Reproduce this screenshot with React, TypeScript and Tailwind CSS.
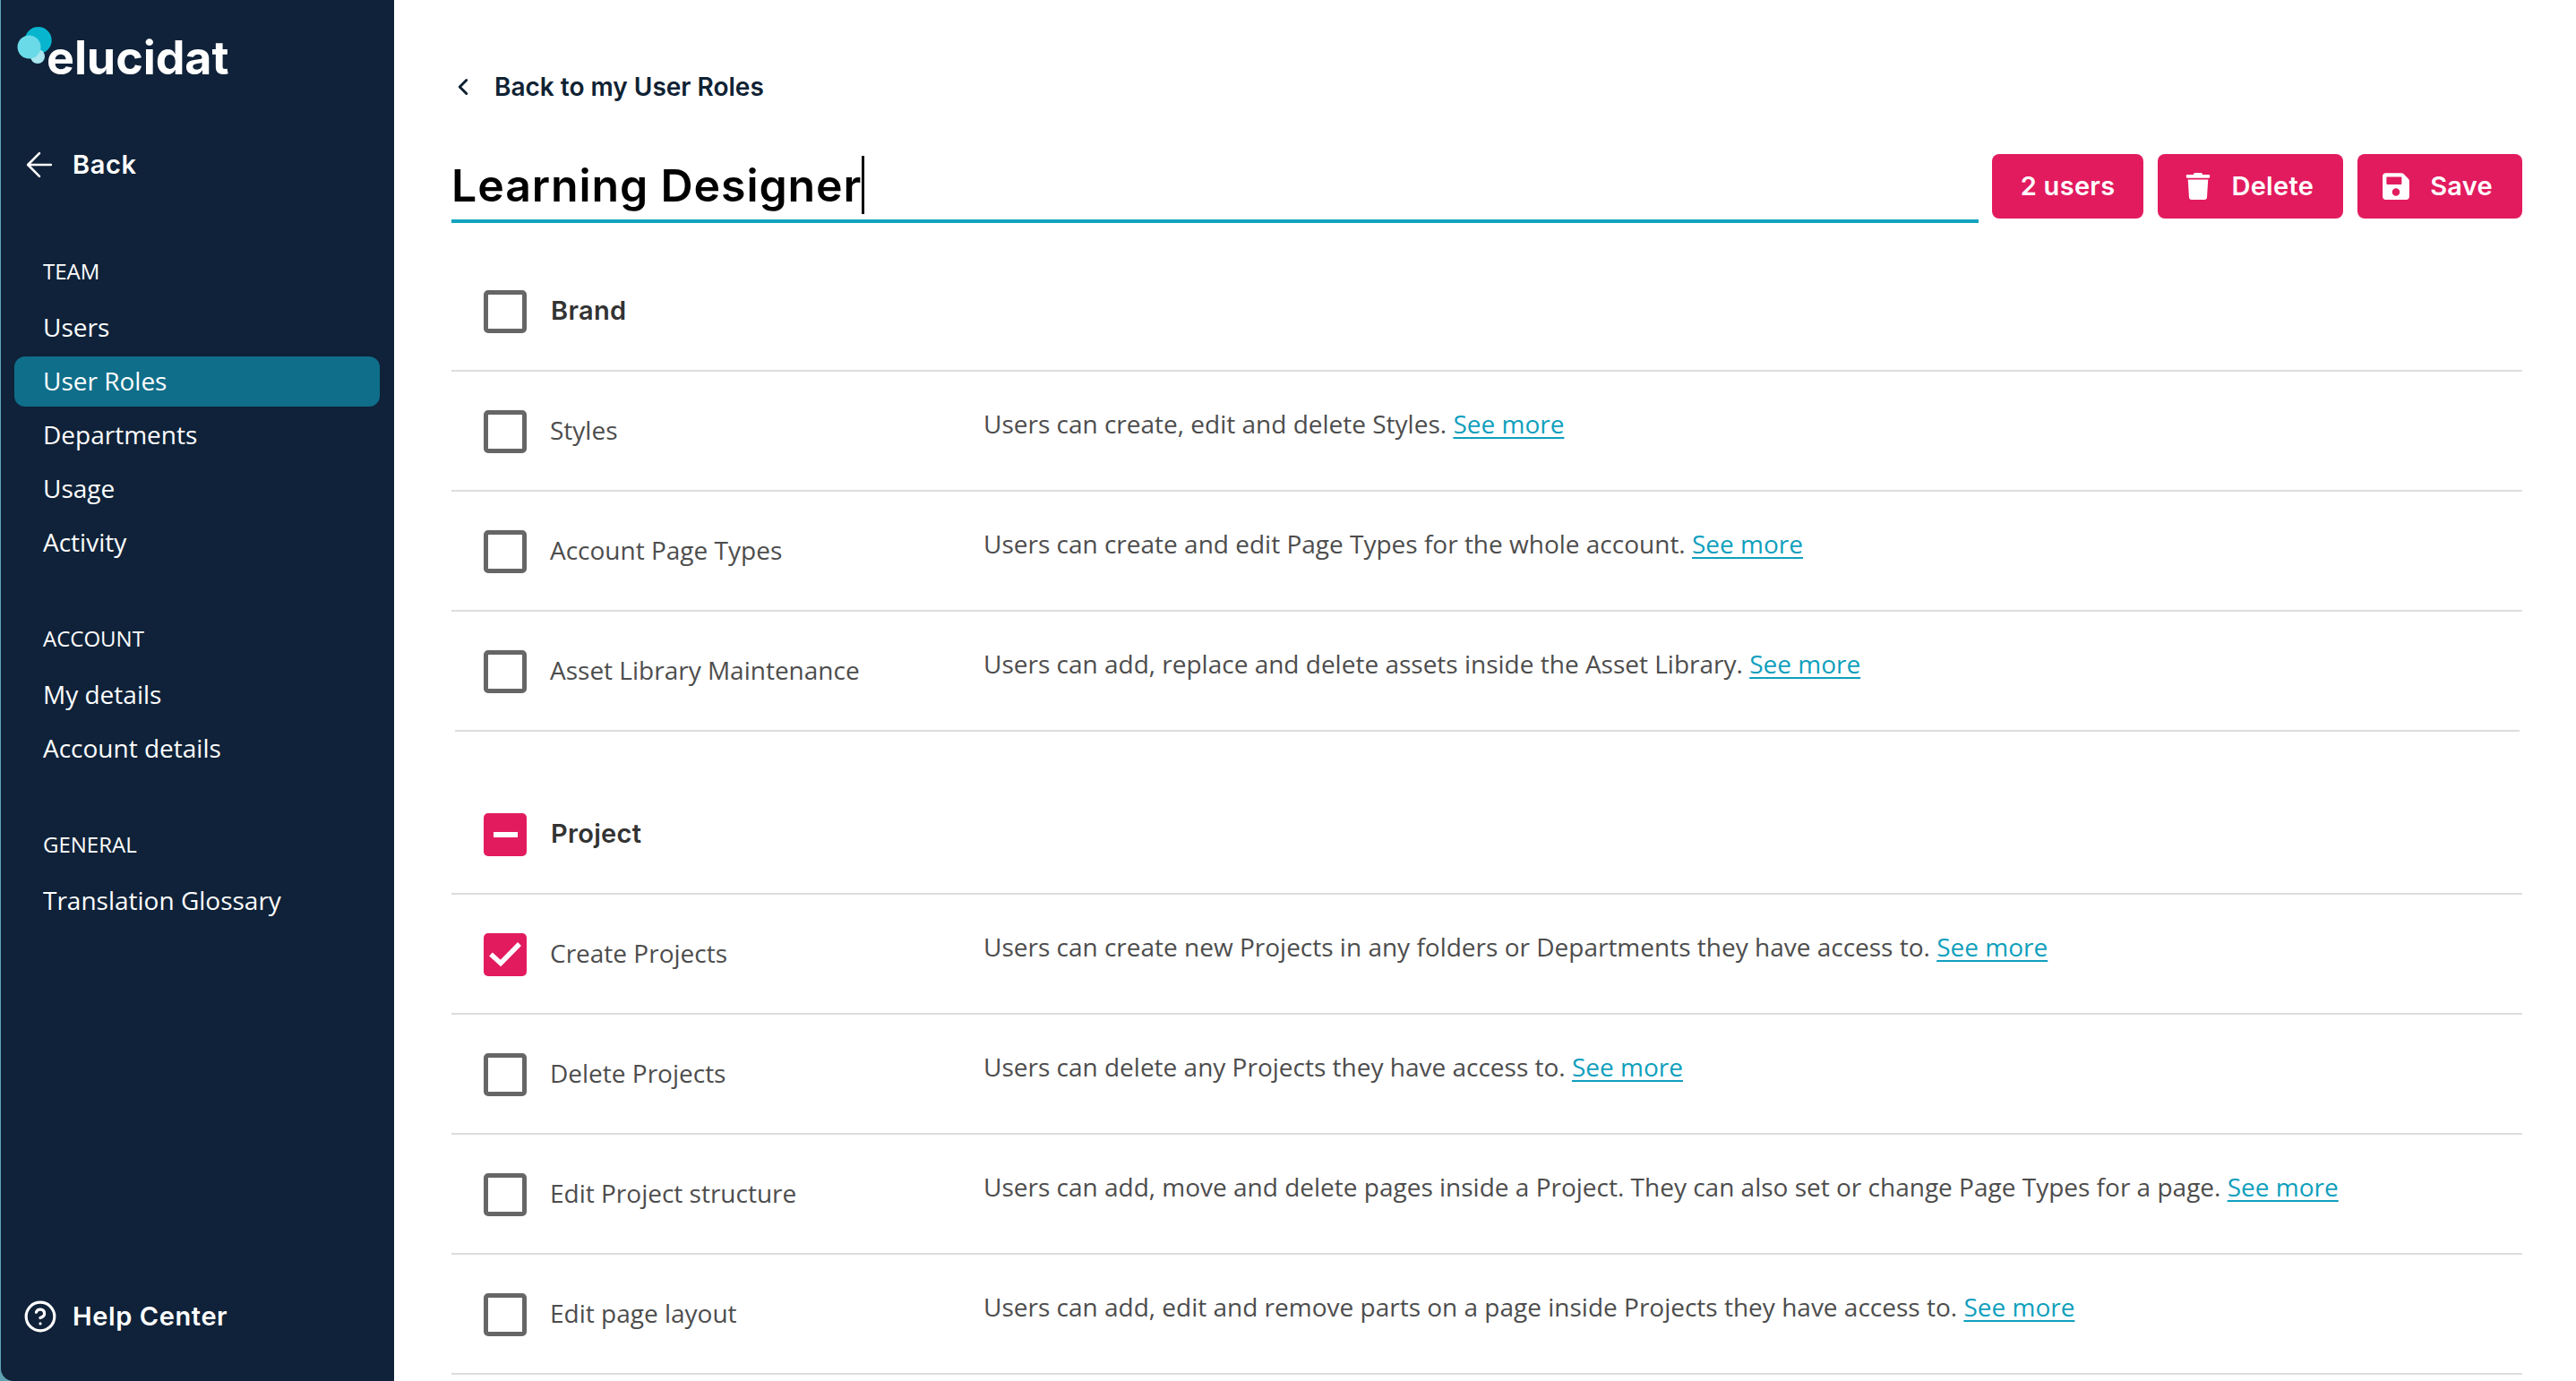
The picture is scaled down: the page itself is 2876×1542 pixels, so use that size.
import type { ReactNode } from "react";
import { ArrowLeft, ChevronLeft, CircleHelp } from "lucide-react";
import { FaSave, FaTrash } from "react-icons/fa";

const heading = "font-['Inter','Liberation_Sans',sans-serif]";

const nav = [
  { title: "TEAM", items: ["Users", "User Roles", "Departments", "Usage", "Activity"] },
  { title: "ACCOUNT", items: ["My details", "Account details"] },
  { title: "GENERAL", items: ["Translation Glossary"] },
];

const groups = [
  {
    name: "Brand",
    state: "off",
    rows: [
      { label: "Styles", text: "Users can create, edit and delete Styles." },
      { label: "Account Page Types", text: "Users can create and edit Page Types for the whole account." },
      { label: "Asset Library Maintenance", text: "Users can add, replace and delete assets inside the Asset Library." },
    ],
  },
  {
    name: "Project",
    state: "mixed",
    rows: [
      { label: "Create Projects", text: "Users can create new Projects in any folders or Departments they have access to.", on: true },
      { label: "Delete Projects", text: "Users can delete any Projects they have access to." },
      { label: "Edit Project structure", text: "Users can add, move and delete pages inside a Project. They can also set or change Page Types for a page." },
      { label: "Edit page layout", text: "Users can add, edit and remove parts on a page inside Projects they have access to." },
    ],
  },
];

const Box = ({ state }: { state: string }) => {
  if (state === "off") {
    return <div className="w-[48px] h-[48px] mt-[2px] shrink-0 rounded-[5px] border-[5px] border-[#666666] bg-white" />;
  }
  return (
    <div className="w-[48px] h-[48px] mt-[2px] shrink-0 rounded-[5px] bg-[#e21b5f] flex items-center justify-center">
      {state === "mixed" ? (
        <div className="w-[27px] h-[6px] bg-white" />
      ) : (
        <svg width="38" height="30" viewBox="0 0 38 30" fill="none">
          <path d="M3 14.5L14 24.5L35 3" stroke="white" strokeWidth="5.5" />
        </svg>
      )}
    </div>
  );
};

const Logo = () => (
  <div className="flex items-start pl-[18px] pt-[30px] h-[156px]">
    <svg width="40" height="42" viewBox="0 0 40 42" className="shrink-0">
      <circle cx="23.7" cy="15" r="15" fill="#08b5cf" />
      <circle cx="23" cy="33" r="8" fill="#a9e6ef" />
      <circle cx="13.5" cy="22.5" r="13" fill="#6bdae8" />
    </svg>
    <span className="-ml-[7px] mt-[5px] text-[52px] leading-[60px] font-bold tracking-[-0.1px] text-white font-['Inter','Liberation_Sans',sans-serif]">
      elucidat
    </span>
  </div>
);

const Sidebar = () => (
  <aside className="w-[439px] ml-px h-full shrink-0 bg-[#0f2239] rounded-bl-[14px] flex flex-col text-white font-['Open_Sans',sans-serif]">
    <Logo />
    <div className={`flex items-center h-[56px] pl-[21px] gap-[15px] ${heading}`}>
      <ArrowLeft size={44} strokeWidth={1.4} />
      <span className="text-[29px] font-semibold tracking-[0.6px]">Back</span>
    </div>
    <div className="mt-[73px] pl-[15px] pr-[16px] flex flex-col gap-[61px]">
      {nav.map((section) => (
        <div key={section.title}>
          <div className="h-[36px] leading-[36px] text-[24px] px-[32px] mb-[17px]">{section.title}</div>
          <div className="flex flex-col gap-[4px]">
            {section.items.map((item) => (
              <div
                key={item}
                className={`h-[56px] leading-[54px] rounded-[12px] px-[32px] text-[28px] ${item === "User Roles" ? "bg-[#0f6e8a]" : ""}`}
              >
                {item}
              </div>
            ))}
          </div>
        </div>
      ))}
    </div>
    <div className={`mt-auto mb-[44px] flex items-center h-[56px] pl-[25px] gap-[17px] ${heading}`}>
      <CircleHelp size={38} strokeWidth={2} />
      <span className="text-[29px] font-semibold tracking-[0.6px]">Help Center</span>
    </div>
  </aside>
);

const Row = ({ label, text, on, inset }: { label: string; text: string; on?: boolean; inset?: boolean }) => (
  <div className="h-[134px] relative flex items-center border-b-2 border-[#dddddd] pl-[36px]">
    <Box state={on ? "on" : "off"} />
    <div className="w-[510px] shrink-0 pl-[26px] -mt-[2px] text-[28px] text-[#4d4d4d]">{label}</div>
    <div className="-mt-[16px] text-[28px] text-[#4d4d4d]">
      {text}{" "}
      <a className="text-[#0f9fbd] underline underline-offset-[4px]">See more</a>
    </div>
    {inset && <div className="absolute -bottom-[2px] left-0 w-[4px] h-[2px] bg-white" />}
    {inset && <div className="absolute -bottom-[2px] right-0 w-[3px] h-[2px] bg-white" />}
  </div>
);

const Group = ({ name, state, rows }: { name: string; state: string; rows: { label: string; text: string; on?: boolean }[] }) => (
  <section>
    <div className="h-[134px] flex items-center border-b-2 border-[#dddddd] pl-[36px]">
      <Box state={state} />
      <div className={`pl-[27px] text-[29px] font-semibold tracking-[0.3px] text-[#333333] ${heading}`}>{name}</div>
    </div>
    {rows.map((row, i) => (
      <Row key={row.label} {...row} inset={name === "Brand" && i === rows.length - 1} />
    ))}
  </section>
);

const Button = ({ children, className }: { children: ReactNode; className: string }) => (
  <button className={`h-[72px] rounded-[8px] bg-[#e21b5f] text-white text-[29px] font-semibold tracking-[0.3px] flex items-center ${heading} ${className}`}>
    {children}
  </button>
);

export default function App() {
  return (
    <div className="w-[2876px] h-[1542px] flex overflow-hidden bg-[#5fa3b3]">
      <Sidebar />
      <main className="flex-1 bg-white pl-[64px] pr-[60px] font-['Open_Sans',sans-serif]">
        <div className={`pt-[72px] h-[172px] flex items-start gap-[20px] -ml-[2px] text-[#0f2233] ${heading}`}>
          <div className="h-[50px] flex items-center">
            <ChevronLeft size={30} strokeWidth={2.4} />
          </div>
          <span className="h-[50px] leading-[50px] text-[28px] font-semibold">Back to my User Roles</span>
        </div>
        <div className="flex items-start gap-[15px] mb-[32px]">
          <div className={`flex-1 h-[77px] border-b-[4px] border-[#12a3bf] flex items-start text-[50px] leading-[70px] font-semibold tracking-[0.9px] text-black ${heading}`}>
            <span>Learning Designer</span>
            <span className="inline-block w-[3px] h-[65px] mt-[2px] bg-black" />
          </div>
          <div className="flex gap-[16px]">
            <Button className="px-[32px]">2 users</Button>
            <Button className="pl-[30px] pr-[33px] gap-[22px]">
              <FaTrash size={30} />
              Delete
            </Button>
            <Button className="pl-[26px] pr-[33px] gap-[21px]">
              <FaSave size={34} />
              Save
            </Button>
          </div>
        </div>
        <div className="flex flex-col gap-[48px]">
          {groups.map((group) => (
            <Group key={group.name} {...group} />
          ))}
        </div>
      </main>
    </div>
  );
}
